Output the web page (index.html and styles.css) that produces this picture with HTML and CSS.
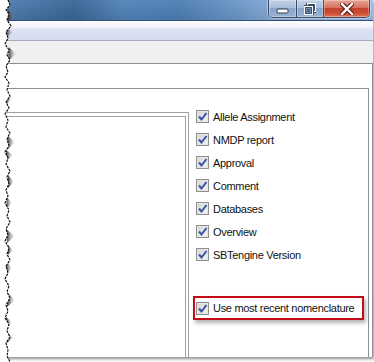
FILE: index.html
```html
<!DOCTYPE html>
<html lang="en">
<head>
    <meta charset="UTF-8">
    <title>Report options</title>
    <link rel="stylesheet" href="styles.css">
</head>
<body>
    <div class="window">
        <div class="titlebar">
            <div class="caption-buttons">
                <div class="cap-btn min">
                    <svg width="13" height="6" viewBox="0 0 13 6"><rect x="1" y="1" width="11" height="4" rx="1" fill="#fff" stroke="#2b3b55"/></svg>
                </div>
                <div class="cap-btn max">
                    <svg width="12" height="12" viewBox="0 0 12 12">
                        <rect x="3.5" y="0.5" width="8" height="8" fill="none" stroke="#2b3b55" stroke-width="3"/>
                        <rect x="3.5" y="0.5" width="8" height="8" fill="none" stroke="#fff" stroke-width="1.2"/>
                        <rect x="0.5" y="3.5" width="8" height="8" fill="#6f8cb5" stroke="#2b3b55" stroke-width="3"/>
                        <rect x="0.5" y="3.5" width="8" height="8" fill="none" stroke="#fff" stroke-width="1.2"/>
                        <rect x="3" y="6" width="3" height="3" fill="#4a6690"/>
                    </svg>
                </div>
                <div class="cap-btn close">
                    <svg width="14" height="12" viewBox="0 0 14 12">
                        <path d="M2 1 L12 11 M12 1 L2 11" stroke="#5a1a12" stroke-width="4.5" stroke-linecap="square"/>
                        <path d="M2 1 L12 11 M12 1 L2 11" stroke="#fff" stroke-width="2.4" stroke-linecap="square"/>
                    </svg>
                </div>
            </div>
        </div>
        <div class="menubar"></div>
        <div class="toolbar"></div>
        <div class="outer-panel">
            <div class="inner-panel">
                <div class="group-outer">
                    <div class="group-inner"></div>
                </div>
                <div class="options">
                    <label class="check"><span class="box"><svg width="11" height="11" viewBox="0 0 11 11"><path d="M2 5.5 L4.5 8.5 L9.5 2" fill="none" stroke="#3552a5" stroke-width="2"/></svg></span>Allele Assignment</label>
                    <label class="check"><span class="box"><svg width="11" height="11" viewBox="0 0 11 11"><path d="M2 5.5 L4.5 8.5 L9.5 2" fill="none" stroke="#3552a5" stroke-width="2"/></svg></span>NMDP report</label>
                    <label class="check"><span class="box"><svg width="11" height="11" viewBox="0 0 11 11"><path d="M2 5.5 L4.5 8.5 L9.5 2" fill="none" stroke="#3552a5" stroke-width="2"/></svg></span>Approval</label>
                    <label class="check"><span class="box"><svg width="11" height="11" viewBox="0 0 11 11"><path d="M2 5.5 L4.5 8.5 L9.5 2" fill="none" stroke="#3552a5" stroke-width="2"/></svg></span>Comment</label>
                    <label class="check"><span class="box"><svg width="11" height="11" viewBox="0 0 11 11"><path d="M2 5.5 L4.5 8.5 L9.5 2" fill="none" stroke="#3552a5" stroke-width="2"/></svg></span>Databases</label>
                    <label class="check"><span class="box"><svg width="11" height="11" viewBox="0 0 11 11"><path d="M2 5.5 L4.5 8.5 L9.5 2" fill="none" stroke="#3552a5" stroke-width="2"/></svg></span>Overview</label>
                    <label class="check"><span class="box"><svg width="11" height="11" viewBox="0 0 11 11"><path d="M2 5.5 L4.5 8.5 L9.5 2" fill="none" stroke="#3552a5" stroke-width="2"/></svg></span>SBTengine Version</label>
                    <div class="highlight">
                        <label class="check"><span class="box"><svg width="11" height="11" viewBox="0 0 11 11"><path d="M2 5.5 L4.5 8.5 L9.5 2" fill="none" stroke="#3552a5" stroke-width="2"/></svg></span>Use most recent nomenclature</label>
                    </div>
                </div>
            </div>
        </div>
    </div>

    <!-- torn edge of the screenshot -->
    <svg class="torn-edge" width="18" height="362" viewBox="0 0 18 362">
        <defs>
            <linearGradient id="blob" x1="0" x2="1" y1="0" y2="0">
                <stop offset="0" stop-color="#333"/>
                <stop offset="1" stop-color="#999" stop-opacity="0"/>
            </linearGradient>
        </defs>
        <g fill="url(#blob)">
            <path d="M8 10 L15 16 L8 22 Z"/>
            <path d="M7 28 L13 32 L6 38 Z"/>
            <path d="M9 47 L16 54 L8 61 Z"/>
            <path d="M6 91 L12 98 L6 105 Z"/>
            <path d="M7 135 L15 142 L8 149 Z"/>
            <path d="M6 150 L13 155 L6 161 Z"/>
            <path d="M8 175 L14 182 L8 188 Z"/>
            <path d="M7 197 L12 203 L6 209 Z"/>
            <path d="M6 229 L15 236 L7 243 Z"/>
            <path d="M8 245 L13 250 L8 255 Z"/>
            <path d="M6 261 L12 268 L6 275 Z"/>
            <path d="M8 293 L15 300 L7 307 Z"/>
            <path d="M6 317 L12 322 L6 328 Z"/>
            <path d="M8 333 L13 338 L7 343 Z"/>
        </g>
        <path fill="#fff" d="M0 0 L8 0 L10 5 L6 10 L9 14 L7 20 L11 26 L6 32 L8 38 L5 44 L9 50 L7 55 L10 60 L6 66 L8 72 L5 77 L9 83 L7 90 L10 96 L6 102 L9 108 L5 114 L8 120 L6 127 L10 133 L7 139 L9 146 L5 152 L8 158 L6 164 L10 171 L7 177 L9 184 L6 190 L8 196 L5 203 L9 210 L7 216 L10 222 L6 229 L8 235 L5 241 L9 248 L7 254 L10 260 L6 266 L8 273 L5 279 L9 286 L7 292 L10 298 L6 305 L8 311 L5 318 L9 324 L7 331 L10 337 L6 343 L8 350 L7 356 L10 362 L0 362 Z"/>
        <polyline fill="none" stroke="#000" stroke-width="1.1" stroke-dasharray="2.5 1" points="8,0 10,5 6,10 9,14 7,20 11,26 6,32 8,38 5,44 9,50 7,55 10,60 6,66 8,72 5,77 9,83 7,90 10,96 6,102 9,108 5,114 8,120 6,127 10,133 7,139 9,146 5,152 8,158 6,164 10,171 7,177 9,184 6,190 8,196 5,203 9,210 7,216 10,222 6,229 8,235 5,241 9,248 7,254 10,260 6,266 8,273 5,279 9,286 7,292 10,298 6,305 8,311 5,318 9,324 7,331 10,337 6,343 8,350 7,356 10,362"/>
    </svg>
</body>
</html>
```

FILE: styles.css
```css
body {
    margin: 0;
    width: 374px;
    height: 362px;
    position: relative;
    overflow: hidden;
    background-color: #fff;
    font-family: "Liberation Sans", Arial, sans-serif;
    font-size: 11px;
    letter-spacing: -0.3px;
    color: #111;
}
.window {
    width: 373px;
    height: 357px;
    display: flex;
    flex-direction: column;
    box-shadow: 1px 2px 3px rgba(0, 0, 0, 0.45);
}
.titlebar {
    height: 20px;
    border-bottom: 1px solid #34507a;
    background:
        linear-gradient(to bottom, rgba(255, 255, 255, 0.06), rgba(0, 0, 0, 0.08)),
        linear-gradient(100deg, #4f7eb1 0%, #386596 20%, #5182b8 33%, #4d7eb4 48%, #6794c6 62%, #88acd7 74%, #a0bee1 100%);
    display: flex;
    justify-content: flex-end;
    padding-right: 3px;
}
.caption-buttons {
    display: flex;
    height: 17px;
    border: 1px solid #3a4c68;
    border-top: none;
    border-radius: 0 0 5px 5px;
    overflow: hidden;
    box-shadow: 0 0 0 1px rgba(255, 255, 255, 0.35);
}
.cap-btn {
    display: flex;
    align-items: center;
    justify-content: center;
    box-shadow: inset 0 0 0 1px rgba(255, 255, 255, 0.3);
}
.cap-btn.min {
    width: 27px;
    border-right: 1px solid #3a4c68;
    background: linear-gradient(#c3d3e7, #a9bedb 45%, #8aa5c9 50%, #9ab3d3);
}
.cap-btn.min svg {
    margin-top: 5px;
}
.cap-btn.max {
    width: 26px;
    border-right: 1px solid #3a4c68;
    background: linear-gradient(#c3d3e7, #a9bedb 45%, #8aa5c9 50%, #9ab3d3);
}
.cap-btn.close {
    width: 45px;
    background: linear-gradient(#e8a797, #d6715d 45%, #c1432f 50%, #cd4f36 80%, #e07a5c);
}
.menubar {
    height: 19px;
    border-bottom: 1px solid #a5adc1;
    background: linear-gradient(#fcfdfe, #eef1f9 7px, #dce2f3 8px, #d6ddf0);
}
.toolbar {
    height: 22px;
    background-color: #f0f0f0;
}
.outer-panel {
    flex: 1;
    display: flex;
    flex-direction: column;
    background-color: #fff;
    border-top: 1px solid #8c8e99;
    border-right: 1px solid #8c8e99;
    padding-top: 24px;
    padding-right: 3px;
}
.inner-panel {
    flex: 1;
    display: flex;
    border-top: 1px solid #8c8e99;
    border-right: 1px solid #8c8e99;
}
.group-outer {
    width: 186px;
    margin-top: 23px;
    padding: 3px 2px 0 0;
    border-top: 1px solid #a0a0a0;
    border-right: 1px solid #a0a0a0;
    display: flex;
}
.group-inner {
    flex: 1;
    border-top: 1px solid #a0a0a0;
    border-right: 1px solid #a0a0a0;
}
.options {
    display: flex;
    flex-direction: column;
    padding-top: 16px;
    margin-left: 7px;
}
.check {
    height: 23px;
    display: flex;
    align-items: center;
    white-space: nowrap;
}
.box {
    width: 11px;
    height: 11px;
    margin-right: 4px;
    border: 1px solid #8f8f8f;
    background: linear-gradient(135deg, #d4d4d4, #f4f4f4);
    box-shadow: inset 0 0 0 1px #e6e6e6;
    display: flex;
}
.highlight {
    width: 166px;
    height: 20px;
    margin: 30px 0 0 -3px;
    padding-left: 1px;
    border: 2px solid #c20d18;
    box-shadow: 2px 3px 4px rgba(0, 0, 0, 0.3);
}
.highlight .check {
    height: 20px;
}
.torn-edge {
    position: absolute;
    top: 0;
    left: 0;
}
```
